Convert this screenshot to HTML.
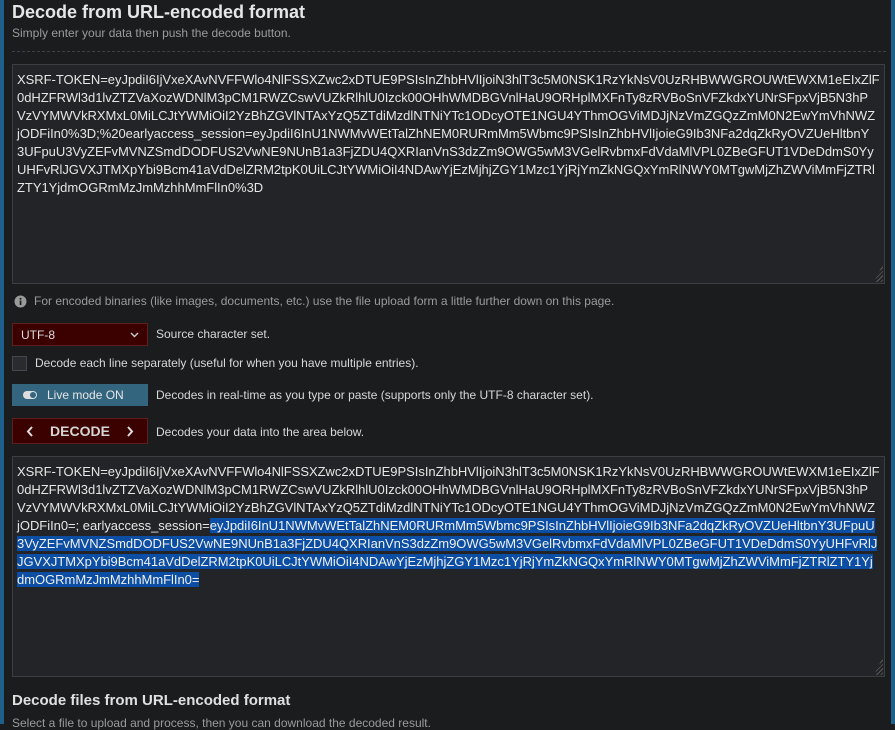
<!DOCTYPE html>
<html><head><meta charset="utf-8"><style>
*{margin:0;padding:0;box-sizing:border-box}
body{width:895px;height:724px;overflow:hidden;background:#1b1c1e;font-family:"Liberation Sans",Arial,sans-serif;position:relative;color:#e3e3e3}
.ls{position:absolute;left:0;top:0;width:4px;height:724px;background:#1f5f8b}
.rs{position:absolute;right:0;top:0;width:4px;height:724px;background:#1f5f8b}
.abs{position:absolute}
h1{position:absolute;left:12px;top:2px;font-size:18px;font-weight:bold;color:#e6e6e6}
.sub{position:absolute;left:12px;top:26px;font-size:12px;color:#9b9b9b}
.dash{position:absolute;left:12px;top:51px;width:874px;border-top:1px dashed #3e4144}
.ta{position:absolute;left:12px;width:873px;background:#232427;border:1px solid #3c3f42;padding:6px 4px;font-size:13px;line-height:18px;color:#e6e6e6;white-space:nowrap;overflow:hidden;letter-spacing:-0.03px}
.ta div{height:18px}
.sel{background:#0b4ea3;color:#f0f0f0}
.grip{position:absolute;right:1px;bottom:1px;width:9px;height:9px;background:linear-gradient(135deg,transparent 0 50%,transparent 50%),repeating-linear-gradient(135deg,transparent 0 2px,#5a5a5a 2px 3px);clip-path:polygon(100% 0,100% 100%,0 100%)}
.lbl{position:absolute;left:156px;font-size:12px;color:#d8d8d8}
</style></head><body>
<div class="ls"></div><div class="rs"></div>
<h1>Decode from URL-encoded format</h1>
<div class="sub">Simply enter your data then push the decode button.</div>
<div class="dash"></div>
<div class="ta" style="top:64px;height:220px">
<div>XSRF-TOKEN=eyJpdiI6IjVxeXAvNVFFWlo4NlFSSXZwc2xDTUE9PSIsInZhbHVlIjoiN3hlT3c5M0NSK1RzYkNsV0UzRHBWWGROUWtEWXM1eEIxZlF</div>
<div>0dHZFRWl3d1lvZTZVaXozWDNlM3pCM1RWZCswVUZkRlhlU0Izck00OHhWMDBGVnlHaU9ORHplMXFnTy8zRVBoSnVFZkdxYUNrSFpxVjB5N3hP</div>
<div>VzVYMWVkRXMxL0MiLCJtYWMiOiI2YzBhZGVlNTAxYzQ5ZTdiMzdlNTNiYTc1ODcyOTE1NGU4YThmOGViMDJjNzVmZGQzZmM0N2EwYmVhNWZ</div>
<div>jODFiIn0%3D;%20earlyaccess_session=eyJpdiI6InU1NWMvWEtTalZhNEM0RURmMm5Wbmc9PSIsInZhbHVlIjoieG9Ib3NFa2dqZkRyOVZUeHltbnY</div>
<div>3UFpuU3VyZEFvMVNZSmdDODFUS2VwNE9NUnB1a3FjZDU4QXRIanVnS3dzZm9OWG5wM3VGelRvbmxFdVdaMlVPL0ZBeGFUT1VDeDdmS0Yy</div>
<div>UHFvRlJGVXJTMXpYbi9Bcm41aVdDelZRM2tpK0UiLCJtYWMiOiI4NDAwYjEzMjhjZGY1Mzc1YjRjYmZkNGQxYmRlNWY0MTgwMjZhZWViMmFjZTRl</div>
<div>ZTY1YjdmOGRmMzJmMzhhMmFlIn0%3D</div>
<div class="grip"></div></div>
<svg class="abs" style="left:14px;top:295px" width="13" height="13" viewBox="0 0 13 13"><circle cx="6.5" cy="6.5" r="6" fill="#9a9a9a"/><rect x="5.7" y="5.5" width="1.7" height="4.5" fill="#1b1c1e"/><circle cx="6.5" cy="3.7" r="1" fill="#1b1c1e"/></svg>
<div class="abs" style="left:34px;top:294px;font-size:12px;color:#9b9b9b">For encoded binaries (like images, documents, etc.) use the file upload form a little further down on this page.</div>
<div class="abs" style="left:12px;top:323px;width:136px;height:23px;background:#3b0000;border:1px solid #5c2020;font-size:12px;color:#ddd;padding:4px 8px">UTF-8
<svg style="position:absolute;right:8px;top:8px" width="9" height="6" viewBox="0 0 9 6"><path d="M1 1l3.5 3.5L8 1" stroke="#ccc" stroke-width="1.4" fill="none"/></svg></div>
<div class="lbl" style="top:327px">Source character set.</div>
<div class="abs" style="left:12px;top:356px;width:15px;height:15px;background:#2a2b2e;border:1px solid #45484b"></div>
<div class="abs" style="left:35px;top:356px;font-size:12px;color:#d8d8d8">Decode each line separately (useful for when you have multiple entries).</div>
<div class="abs" style="left:12px;top:384px;width:136px;height:22px;background:#33657f;font-size:12px;color:#e6e6e6;padding:4px 0 0 35px">Live mode ON
<div style="position:absolute;left:11px;top:7px;width:14px;height:8px;border-radius:4px;background:#ddd"></div><div style="position:absolute;left:18px;top:8px;width:6px;height:6px;border-radius:3px;background:#33657f"></div></div>
<div class="lbl" style="top:388px">Decodes in real-time as you type or paste (supports only the UTF-8 character set).</div>
<div class="abs" style="left:12px;top:418px;width:136px;height:26px;background:#3b0000;border:1px solid #5c2020;font-size:14px;font-weight:bold;color:#d6d6d6;text-align:center;line-height:24px">DECODE
<svg style="position:absolute;left:13px;top:7px" width="8" height="11" viewBox="0 0 8 11"><path d="M6 1L2 5.5 6 10" stroke="#ddd" stroke-width="2" fill="none"/></svg>
<svg style="position:absolute;right:13px;top:7px" width="8" height="11" viewBox="0 0 8 11"><path d="M2 1l4 4.5L2 10" stroke="#ddd" stroke-width="2" fill="none"/></svg></div>
<div class="lbl" style="top:425px">Decodes your data into the area below.</div>
<div class="ta" style="top:456px;height:221px">
<div>XSRF-TOKEN=eyJpdiI6IjVxeXAvNVFFWlo4NlFSSXZwc2xDTUE9PSIsInZhbHVlIjoiN3hlT3c5M0NSK1RzYkNsV0UzRHBWWGROUWtEWXM1eEIxZlF</div>
<div>0dHZFRWl3d1lvZTZVaXozWDNlM3pCM1RWZCswVUZkRlhlU0Izck00OHhWMDBGVnlHaU9ORHplMXFnTy8zRVBoSnVFZkdxYUNrSFpxVjB5N3hP</div>
<div>VzVYMWVkRXMxL0MiLCJtYWMiOiI2YzBhZGVlNTAxYzQ5ZTdiMzdlNTNiYTc1ODcyOTE1NGU4YThmOGViMDJjNzVmZGQzZmM0N2EwYmVhNWZ</div>
<div>jODFiIn0=; earlyaccess_session=<span class="sel">eyJpdiI6InU1NWMvWEtTalZhNEM0RURmMm5Wbmc9PSIsInZhbHVlIjoieG9Ib3NFa2dqZkRyOVZUeHltbnY3UFpuU</span></div>
<div><span class="sel">3VyZEFvMVNZSmdDODFUS2VwNE9NUnB1a3FjZDU4QXRIanVnS3dzZm9OWG5wM3VGelRvbmxFdVdaMlVPL0ZBeGFUT1VDeDdmS0YyUHFvRlJ</span></div>
<div><span class="sel">JGVXJTMXpYbi9Bcm41aVdDelZRM2tpK0UiLCJtYWMiOiI4NDAwYjEzMjhjZGY1Mzc1YjRjYmZkNGQxYmRlNWY0MTgwMjZhZWViMmFjZTRlZTY1Yj</span></div>
<div><span class="sel">dmOGRmMzJmMzhhMmFlIn0=</span></div>
<div class="grip"></div></div>
<div class="abs" style="left:12px;top:692px;font-size:15px;font-weight:bold;color:#e0e0e0">Decode files from URL-encoded format</div>
<div class="abs" style="left:12px;top:716px;font-size:12px;color:#9b9b9b">Select a file to upload and process, then you can download the decoded result.</div>
</body></html>
